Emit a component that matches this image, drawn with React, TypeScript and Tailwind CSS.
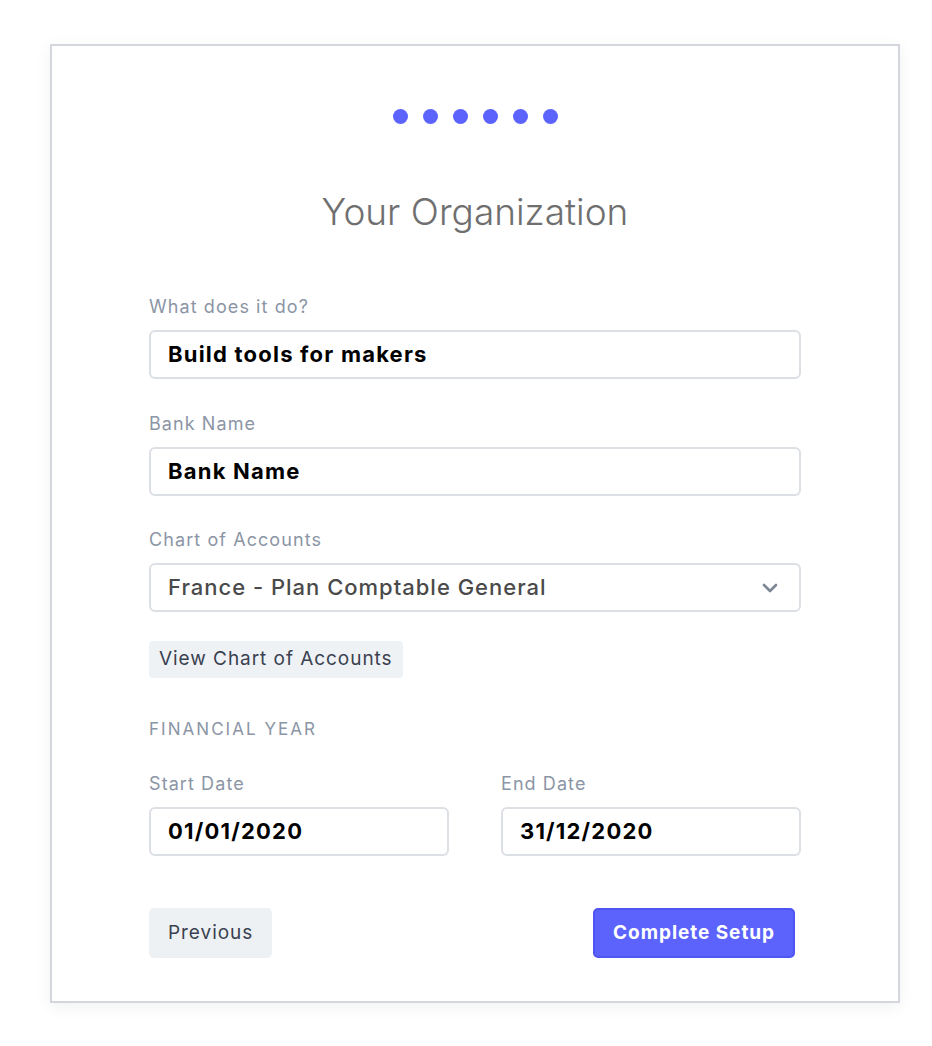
import React from "react";

const Label: React.FC<{ children: React.ReactNode }> = ({ children }) => (
  <div className="text-[18px] leading-6 tracking-[0.06em] text-[#8b95a5] mb-[11px]">{children}</div>
);

const Field: React.FC<{ value: string }> = ({ value }) => (
  <div className="h-[49px] border-2 border-[#dcdfe4] rounded-[6px] flex items-center px-[17px] text-[22px] tracking-[0.055em] font-bold text-black">
    {value}
  </div>
);

const App: React.FC = () => {
  return (
    <div className="min-h-screen bg-white pt-[44px] pl-[50px]" style={{ fontFamily: "Inter, 'Liberation Sans', sans-serif" }}>
      <div className="w-[850px] border-2 border-[#d3d7dd] bg-white shadow-[0_4px_16px_rgba(0,0,0,0.06)] pt-[63px] pb-[43px]">
        <div className="w-[652px] mx-auto">
          <div className="flex justify-center gap-[15px]">
            {[0, 1, 2, 3, 4, 5].map((i) => (
              <span key={i} className="w-[15px] h-[15px] rounded-full bg-[#5c63fc]" />
            ))}
          </div>

          <h1 className="mt-[64px] text-center text-[37px] leading-[48px] font-light text-[#6f6f6f]">
            Your Organization
          </h1>

          <div className="mt-[59px]">
            <Label>What does it do?</Label>
            <Field value="Build tools for makers" />
          </div>

          <div className="mt-[33px]">
            <Label>Bank Name</Label>
            <Field value="Bank Name" />
          </div>

          <div className="mt-[32px]">
            <Label>Chart of Accounts</Label>
            <div className="h-[49px] border-2 border-[#dcdfe4] rounded-[6px] flex items-center justify-between pl-[17px] pr-[20px] text-[22px] tracking-[0.045em] font-medium text-[#4a4a4a]">
              <span>France - Plan Comptable General</span>
              <svg width="18" height="12" viewBox="0 0 18 12" fill="none">
                <path d="M3 3l6 6 6-6" stroke="#7d8694" strokeWidth="2.6" strokeLinecap="round" strokeLinejoin="round" />
              </svg>
            </div>
          </div>

          <button className="mt-[29px] h-[37px] px-[10px] rounded-[4px] bg-[#eff2f5] text-[19px] tracking-[0.05em] text-[#3a4150]">
            View Chart of Accounts
          </button>

          <div className="mt-[39px] text-[17px] leading-6 tracking-[0.12em] uppercase text-[#8b95a5]">
            Financial Year
          </div>

          <div className="mt-[31px] grid grid-cols-2 gap-[52px]">
            <div>
              <Label>Start Date</Label>
              <Field value="01/01/2020" />
            </div>
            <div>
              <Label>End Date</Label>
              <Field value="31/12/2020" />
            </div>
          </div>

          <div className="mt-[52px] flex justify-between items-center pr-[6px]">
            <button className="h-[50px] px-[19px] rounded-[5px] bg-[#eef1f4] text-[19px] tracking-[0.05em] text-[#3a4150]">
              Previous
            </button>
            <button className="h-[50px] px-[18px] rounded-[5px] bg-[#5c63fc] border-2 border-[#4e55f2] text-[19px] tracking-[0.05em] font-bold text-white">
              Complete Setup
            </button>
          </div>
        </div>
      </div>
    </div>
  );
};

export default App;
